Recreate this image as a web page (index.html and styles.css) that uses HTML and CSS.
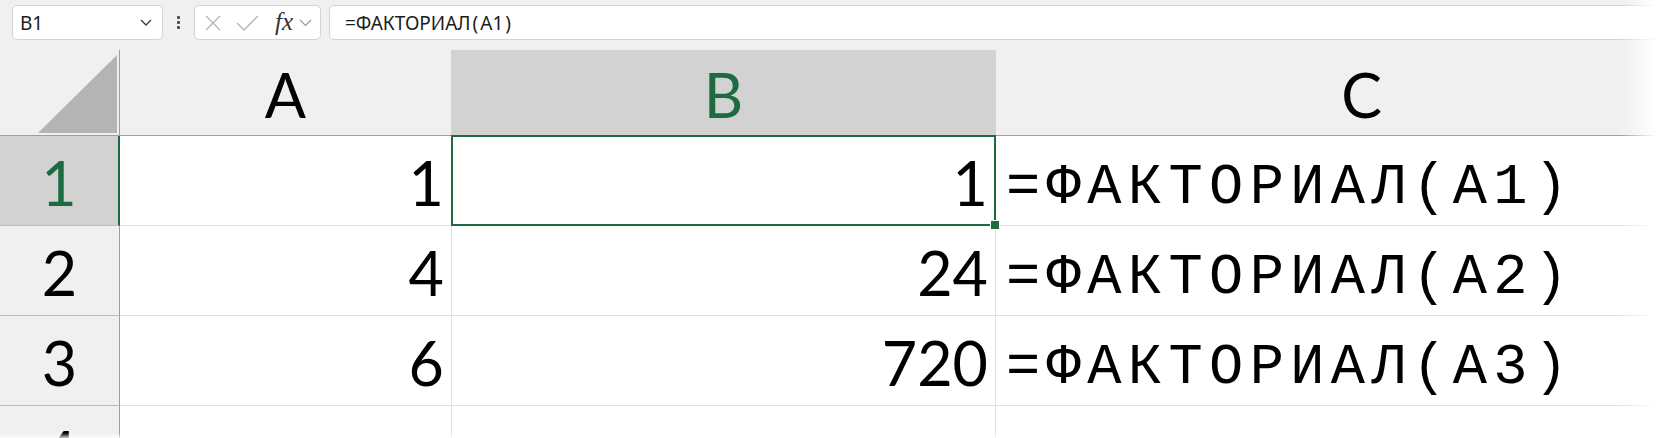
FILE: index.html
```html
<!DOCTYPE html>
<html lang="ru">
<head>
<meta charset="utf-8">
<title>Excel</title>
<link rel="stylesheet" href="styles.css">
</head>
<body>
<div class="app">
  <div class="fbar">
    <div class="namebox">
      <span class="nb-text">B1</span>
      <svg class="chev" width="12" height="7" viewBox="0 0 12 7"><polyline points="1,1 6,6 11,1" fill="none" stroke="#3a3a3a" stroke-width="1.3"/></svg>
    </div>
    <div class="dots"><span></span><span></span><span></span></div>
    <div class="fbtns">
      <svg class="ico-x" width="18" height="16" viewBox="0 0 18 16"><path d="M2 1 L16 15 M16 1 L2 15" stroke="#b4b4b4" stroke-width="1.3" fill="none"/></svg>
      <svg class="ico-check" width="23" height="16" viewBox="0 0 23 16"><polyline points="1,8 8,15 22,1" fill="none" stroke="#b4b4b4" stroke-width="1.3"/></svg>
      <span class="fx">fx</span>
      <svg class="chev-s" width="13" height="8" viewBox="0 0 13 8"><polyline points="1,1 6.5,6.5 12,1" fill="none" stroke="#9a9a9a" stroke-width="1.2"/></svg>
    </div>
    <div class="finput">=ФАКТОРИАЛ<span class="par">(</span>А1<span class="par">)</span></div>
  </div>
  <div class="sheet">
    <div class="corner"><svg width="79" height="78" viewBox="0 0 79 78"><polygon points="79,0 79,78 0,78" fill="#b4b4b4"/></svg></div>
    <div class="ch">A</div>
    <div class="ch sel">B</div>
    <div class="ch">C</div>

    <div class="rh sel">1</div>
    <div class="cell num">1</div>
    <div class="cell num active">1</div>
    <div class="cell formula">=ФАКТОРИАЛ(А1)</div>

    <div class="rh">2</div>
    <div class="cell num">4</div>
    <div class="cell num">24</div>
    <div class="cell formula">=ФАКТОРИАЛ(А2)</div>

    <div class="rh">3</div>
    <div class="cell num">6</div>
    <div class="cell num">720</div>
    <div class="cell formula">=ФАКТОРИАЛ(А3)</div>

    <div class="rh">4</div>
    <div class="cell"></div>
    <div class="cell"></div>
    <div class="cell"></div>
  </div>
  <div class="fade-r"></div>
  <div class="fade-b"></div>
</div>
</body>
</html>
```
FILE: styles.css
```css
* { box-sizing: border-box; margin: 0; padding: 0; }
html, body { width: 1656px; height: 438px; overflow: hidden; background: #fff; }
body { font-family: "Lato", sans-serif; color: #000; }

.app { position: relative; width: 1656px; height: 438px; overflow: hidden; }

/* formula bar */
.fbar {
  height: 50px;
  background: #f0f0f0;
  display: flex;
  align-items: flex-start;
  padding: 5px 0 0 12px;
  font-family: "Noto Sans", sans-serif;
}
.namebox {
  width: 151px;
  height: 35px;
  background: #fff;
  border: 1px solid #d3d3d3;
  border-radius: 5px;
  display: flex;
  align-items: center;
  justify-content: space-between;
  padding: 0 10px 0 7px;
  font-size: 19px;
  color: #1b1b1b;
}
.dots {
  width: 31px;
  height: 35px;
  display: flex;
  flex-direction: column;
  align-items: center;
  justify-content: center;
  gap: 2px;
}
.dots span { width: 3px; height: 3px; background: #4a4a4a; border-radius: 1px; }
.fbtns {
  width: 127px;
  height: 35px;
  background: #fff;
  border: 1px solid #d3d3d3;
  border-radius: 5px;
  display: flex;
  align-items: center;
  padding-left: 9px;
}
.ico-check { margin-left: 14px; }
.fx {
  margin-left: 16px;
  font-family: "Liberation Serif", serif;
  font-style: italic;
  font-size: 25px;
  color: #333;
  line-height: 1;
  margin-top: -3px;
}
.chev-s { margin-left: 6px; }
.finput {
  flex: 1;
  height: 35px;
  margin-left: 8px;
  margin-right: -10px;
  background: #fff;
  border: 1px solid #d3d3d3;
  border-radius: 5px;
  display: flex;
  align-items: center;
  padding-left: 15px;
  font-size: 19px;
  color: #1b1b1b;
}
.par { padding: 0 2px; }

/* sheet */
.sheet {
  display: grid;
  grid-template-columns: 120px 332px 544px 732px;
  grid-template-rows: 86px 90px 90px 90px 90px;
}
.corner {
  background: #f0f0f0;
  border-right: 1px solid #9e9e9e;
  border-bottom: 1px solid #9e9e9e;
  display: flex;
  align-items: flex-end;
  justify-content: flex-end;
  padding: 0 2px 2px 0;
}
.corner svg { display: block; }
.ch {
  background: #f0f0f0;
  border-right: 1px solid #d4d4d4;
  border-bottom: 1px solid #9e9e9e;
  display: flex;
  justify-content: center;
  align-items: flex-end;
  font-size: 61px;
  line-height: 61px;
  padding-bottom: 10px;
}
.ch.sel { background: #d2d2d2; color: #1e6b41; }
.rh {
  background: #f0f0f0;
  border-right: 1px solid #9e9e9e;
  border-bottom: 1px solid #bcbcbc;
  display: flex;
  justify-content: center;
  align-items: flex-end;
  font-size: 61px;
  line-height: 61px;
  padding-bottom: 12px;
}
.rh.sel { background: #d2d2d2; color: #1e6b41; border-right: 2px solid #1e6b41; }
.cell {
  border-right: 1px solid #e1e1e1;
  border-bottom: 1px solid #e1e1e1;
  display: flex;
  align-items: flex-end;
  font-size: 61px;
  line-height: 61px;
  padding: 0 7px 12px 9px;
}
.num { justify-content: flex-end; }
.formula {
  font-family: "Liberation Mono", monospace;
  font-size: 57px;
  line-height: 57px;
  letter-spacing: 6.4px;
  padding-bottom: 8px;
  padding-left: 10px;
  white-space: nowrap;
}
.active { position: relative; }
.active::after {
  content: "";
  position: absolute;
  top: -1px; left: -1px; right: -1px; bottom: -1px;
  border: 2px solid #1e6b41;
}
.active::before {
  content: "";
  position: absolute;
  right: -5px; bottom: -5px;
  width: 8px; height: 8px;
  background: #1e6b41;
  border: 1px solid #fff;
  z-index: 2;
}

.fade-r {
  position: absolute;
  top: 0; right: 0;
  width: 36px; height: 438px;
  background: linear-gradient(to right, rgba(255,255,255,0), #fff);
}
.fade-b {
  position: absolute;
  left: 0; bottom: 0;
  width: 1656px; height: 5px;
  background: linear-gradient(to bottom, rgba(255,255,255,0), rgba(255,255,255,0.8));
}
```
